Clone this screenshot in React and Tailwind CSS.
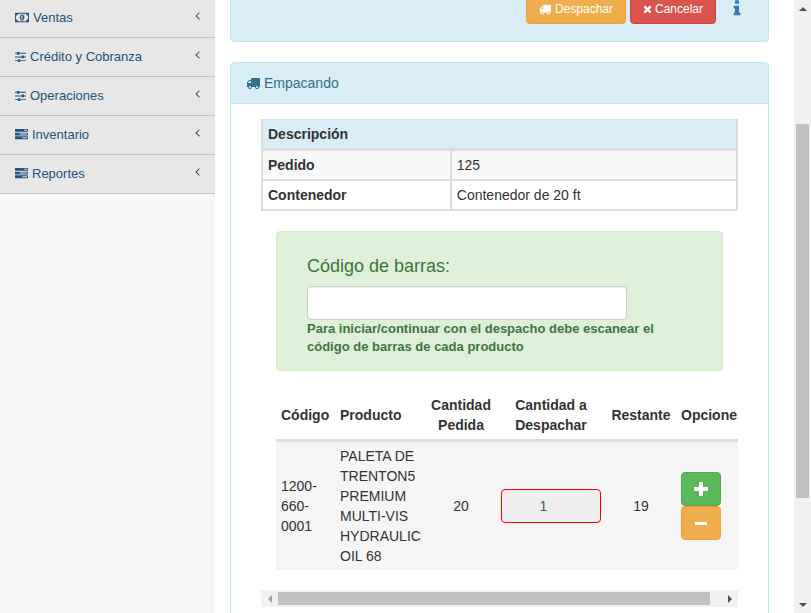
import React from "react";
import clsx from "clsx";

const ICONS = {
  truck: {
    box: "0 0 1792 1792",
    d: "M640 1408q0-52-38-90t-90-38-90 38-38 90 38 90 90 38 90-38 38-90zm-384-512h384v-256h-158q-13 0-22 9l-195 195q-9 9-9 22v30zm1280 512q0-52-38-90t-90-38-90 38-38 90 38 90 90 38 90-38 38-90zm256-1088v1024q0 15-4 26.5t-13.5 18.5-16.5 11.5-23.5 6-22.5 2-25.5 0-22.5-.5q0 106-75 181t-181 75-181-75-75-181h-384q0 106-75 181t-181 75-181-75-75-181h-64q-3 0-22.5.5t-25.5 0-22.5-2-23.5-6-16.5-11.5-13.5-18.5-4-26.5q0-26 19-45t45-19v-320q0-8-.5-35t0-38 2.5-34.5 6.5-37 14-30.5 22.5-30l198-198q19-19 50.5-32t58.5-13h160v-192q0-26 19-45t45-19h1024q26 0 45 19t19 45z",
  },
  sliders: {
    box: "128 0 1536 1792",
    d: "M480 1408v128h-352v-128h352zm352-128q26 0 45 19t19 45v256q0 26-19 45t-45 19h-256q-26 0-45-19t-19-45v-256q0-26 19-45t45-19h256zm160-384v128h-864v-128h864zm-640-512v128h-224v-128h224zm1312 1024v128h-736v-128h736zm-960-1152q26 0 45 19t19 45v256q0 26-19 45t-45 19h-256q-26 0-45-19t-19-45v-256q0-26 19-45t45-19h256zm640 512q26 0 45 19t19 45v256q0 26-19 45t-45 19h-256q-26 0-45-19t-19-45v-256q0-26 19-45t45-19h256zm320 128v128h-224v-128h224zm0-512v128h-864v-128h864z",
  },
  tasks: {
    box: "0 0 1792 1792",
    d: "M1024 1408h640v-128h-640v128zm-384-512h1024v-128h-1024v128zm640-512h384v-128h-384v128zm512 832v256q0 26-19 45t-45 19h-1664q-26 0-45-19t-19-45v-256q0-26 19-45t45-19h1664q26 0 45 19t19 45zm0-512v256q0 26-19 45t-45 19h-1664q-26 0-45-19t-19-45v-256q0-26 19-45t45-19h1664q26 0 45 19t19 45zm0-512v256q0 26-19 45t-45 19h-1664q-26 0-45-19t-19-45v-256q0-26 19-45t45-19h1664q26 0 45 19t19 45z",
  },
  money: {
    box: "0 0 1920 1792",
    d: "M768 1152h384v-96h-128v-448h-114l-148 137 77 80q42-37 55-57h2v288h-128v96zm512-256q0 70-21 142t-59.5 134-101.5 101-138 39-138-39-101.5-101-59.5-134-21-142 21-142 59.5-134 101.5-101 138-39 138 39 101.5 101 59.5 134 21 142zm512 256v-512q-106 0-181-75t-75-181h-1152q0 106-75 181t-181 75v512q106 0 181 75t75 181h1152q0-106 75-181t181-75zm128-832v1152q0 26-19 45t-45 19h-1792q-26 0-45-19t-19-45v-1152q0-26 19-45t45-19h1792q26 0 45 19t19 45z",
  },
  times: {
    box: "192 0 1408 1792",
    d: "M1490 1322q0 40-28 68l-136 136q-28 28-68 28t-68-28l-294-294-294 294q-28 28-68 28t-68-28l-136-136q-28-28-28-68t28-68l294-294-294-294q-28-28-28-68t28-68l136-136q28-28 68-28t68 28l294 294 294-294q28-28 68-28t68 28l136 136q28 28 28 68t-28 68l-294 294 294 294q28 28 28 68z",
  },
  info: {
    box: "576 0 640 1792",
    d: "M1216 1344v128q0 26-19 45t-45 19h-512q-26 0-45-19t-19-45v-128q0-26 19-45t45-19h64v-384h-64q-26 0-45-19t-19-45v-128q0-26 19-45t45-19h384q26 0 45 19t19 45v576h64q26 0 45 19t19 45zm-128-1152v192q0 26-19 45t-45 19h-256q-26 0-45-19t-19-45v-192q0-26 19-45t45-19h256q26 0 45 19t19 45z",
  },
  angleLeft: {
    box: "576 0 640 1792",
    d: "M1203 544q0 13-10 23l-393 393 393 393q10 10 10 23t-10 23l-50 50q-10 10-23 10t-23-10l-466-466q-10-10-10-23t10-23l466-466q10-10 23-10t23 10l50 50q10 10 10 23z",
  },
  plus: { box: "0 0 14 14", d: "M5 0h4v5h5v4h-5v5h-4v-5h-5v-4h5z" },
  minus: { box: "0 0 12 14", d: "M0 6h12v3h-12z" },
};

function Icon({ name, className }) {
  return (
    <svg viewBox={ICONS[name].box} fill="currentColor" aria-hidden="true" className={clsx("shrink-0", className)}>
      <path d={ICONS[name].d} />
    </svg>
  );
}

const MENU = [
  { label: "Ventas", icon: "money", size: "h-[13px] w-[14px]" },
  { label: "Crédito y Cobranza", icon: "sliders", size: "h-[13px] w-[11px]" },
  { label: "Operaciones", icon: "sliders", size: "h-[13px] w-[11px]" },
  { label: "Inventario", icon: "tasks", size: "h-[13px] w-[13px]" },
  { label: "Reportes", icon: "tasks", size: "h-[13px] w-[13px]" },
];

function Sidebar() {
  return (
    <nav className="w-[215px] shrink-0 bg-[#f8f8f8]">
      <ul className="-mt-px">
        {MENU.map((item) => (
          <li key={item.label} className="border-b border-[#c4c4c4] bg-[#e7e7e7]">
            <a href="#" className="flex h-[38px] items-center gap-1 px-[15px] text-[13px] text-[#23527c]">
              <Icon name={item.icon} className={clsx("mb-[2px]", item.size)} />
              <span className="grow">{item.label}</span>
              <Icon name="angleLeft" className="mb-[6px] h-[13px] w-[5px]" />
            </a>
          </li>
        ))}
      </ul>
    </nav>
  );
}

function OrderSummary() {
  const edge = "border-[#ddd] px-[5px] py-1 text-left";
  return (
    <table className="w-full table-fixed border-separate border-spacing-0">
      <colgroup>
        <col className="w-2/5" />
        <col />
      </colgroup>
      <thead>
        <tr className="bg-[#d9edf7]">
          <th colSpan={2} className={clsx(edge, "border-x-2 border-t border-b-[3px]")}>Descripción</th>
        </tr>
      </thead>
      <tbody>
        <tr className="bg-[#f9f9f9]">
          <th scope="row" className={clsx(edge, "border-x-2 border-b-2")}>Pedido</th>
          <td className={clsx(edge, "border-r-2 border-b-2")}>125</td>
        </tr>
        <tr>
          <th scope="row" className={clsx(edge, "border-x-2 border-b-2")}>Contenedor</th>
          <td className={clsx(edge, "border-r-2 border-b-2")}>Contenedor de 20 ft</td>
        </tr>
      </tbody>
    </table>
  );
}

function BarcodeBox() {
  return (
    <section className="mx-[15px] mt-5 rounded-[4px] border border-[#d6e9c6] bg-[#dff0d8] px-[30px] pt-6 pb-[14px] text-[#3c763d]">
      <label htmlFor="barcode" className="mb-[10px] block text-[18px]/[20px]">Código de barras:</label>
      <input
        id="barcode"
        type="text"
        className="block h-[34px] w-full max-w-[320px] rounded-[4px] border border-[#ccc] bg-white px-3 text-[#555] shadow-[inset_0_1px_1px_rgba(0,0,0,0.075)]"
      />
      <p className="text-[13px]/[18px] font-bold">
        Para iniciar/continuar con el despacho debe escanear el código de barras de cada producto
      </p>
    </section>
  );
}

function ProductTable() {
  const head = "border-b-[3px] border-[#ddd] px-[5px] py-1";
  const cell = "px-[5px] py-1";
  return (
    <div className="mt-5 ml-[15px] overflow-hidden">
      <table className="w-[475px] table-fixed border-separate border-spacing-0">
        <colgroup>
          <col className="w-[59px]" />
          <col className="w-[91px]" />
          <col className="w-[70px]" />
          <col className="w-[110px]" />
          <col className="w-[70px]" />
          <col />
        </colgroup>
        <thead>
          <tr>
            <th className={clsx(head, "text-left")}>Código</th>
            <th className={clsx(head, "text-left")}>Producto</th>
            <th className={head}>Cantidad Pedida</th>
            <th className={head}>Cantidad a Despachar</th>
            <th className={head}>Restante</th>
            <th className={clsx(head, "text-left")}>Opciones</th>
          </tr>
        </thead>
        <tbody>
          <tr className="bg-[#f5f5f5]">
            <td className={cell}>1200-660-0001</td>
            <td className={cell}>PALETA DE TRENTON5 PREMIUM MULTI-VIS HYDRAULIC OIL 68</td>
            <td className={clsx(cell, "text-center")}>20</td>
            <td className={cell}>
              <input
                type="text"
                inputMode="numeric"
                readOnly
                value="1"
                aria-label="Cantidad a despachar"
                className="block h-[34px] w-full rounded-[4px] border border-[#f00] bg-[#eee] pr-[27px] pl-3 text-center text-[#555]"
              />
            </td>
            <td className={clsx(cell, "text-center")}>19</td>
            <td className={cell}>
              <button type="button" aria-label="Agregar" className="flex h-[34px] w-10 items-center justify-center rounded-[4px] border border-[#4cae4c] bg-[#5cb85c] text-white">
                <Icon name="plus" className="h-[14px] w-[14px]" />
              </button>
              <button type="button" aria-label="Quitar" className="flex h-[34px] w-10 items-center justify-center rounded-[4px] border border-[#eea236] bg-[#f0ad4e] text-white">
                <Icon name="minus" className="h-[14px] w-[12px]" />
              </button>
            </td>
          </tr>
        </tbody>
      </table>
    </div>
  );
}

function HorizontalScrollbar() {
  return (
    <div className="mt-5 flex h-[17px] items-center bg-[#f1f1f1]" aria-hidden="true">
      <span className="flex w-[17px] justify-center">
        <span className="border-y-4 border-r-4 border-y-transparent border-r-[#a3a3a3]" />
      </span>
      <span className="mr-[11px] h-[13px] grow bg-[#c1c1c1]" />
      <span className="flex w-[17px] justify-center">
        <span className="border-y-4 border-l-4 border-y-transparent border-l-[#505050]" />
      </span>
    </div>
  );
}

function PageScrollbar() {
  return (
    <div className="flex w-[17px] shrink-0 flex-col items-center bg-[#f1f1f1]" aria-hidden="true">
      <span className="flex h-[17px] items-center">
        <span className="border-x-4 border-b-4 border-x-transparent border-b-[#505050]" />
      </span>
      <span className="grow-[107]" />
      <span className="w-[13px] grow-[374] bg-[#c1c1c1]" />
      <span className="grow-[98]" />
      <span className="flex h-[17px] items-center">
        <span className="border-x-4 border-t-4 border-x-transparent border-t-[#505050]" />
      </span>
    </div>
  );
}

export default function App() {
  return (
    <div className="flex h-screen overflow-hidden bg-white font-['Liberation_Sans',Arial,sans-serif] text-[14px]/[20px] text-[#333]">
      <Sidebar />
      <main className="min-w-0 grow pr-[25px] pl-[15px]">
        <section className="-mt-[25px] flex items-center justify-end gap-1 rounded-[4px] border border-[#bce8f1] bg-[#d9edf7] py-[17px] pr-[27px]">
          <button type="button" className="flex h-[31px] items-center gap-1 rounded-[4px] border border-[#eea236] bg-[#f0ad4e] px-3 text-[12px] text-white">
            <Icon name="truck" className="h-3 w-3" />
            Despachar
          </button>
          <button type="button" className="flex h-[31px] items-center gap-[3px] rounded-[4px] border border-[#d43f3a] bg-[#d9534f] px-3 text-[12px] text-white">
            <Icon name="times" className="h-3 w-[9px]" />
            Cancelar
          </button>
          <a href="#" aria-label="Información" className="ml-[13px] text-[#337ab7]">
            <Icon name="info" className="h-[19px] w-2" />
          </a>
        </section>
        <section className="mt-5 rounded-[4px] border border-[#bce8f1]">
          <h2 className="flex items-center gap-1 rounded-t-[3px] border-b border-[#bce8f1] bg-[#d9edf7] px-[15px] py-[10px] text-[#31708f]">
            <Icon name="truck" className="h-[14px] w-[14px]" />
            Empacando
          </h2>
          <div className="px-[30px] py-[15px]">
            <OrderSummary />
            <BarcodeBox />
            <ProductTable />
            <HorizontalScrollbar />
          </div>
        </section>
      </main>
      <PageScrollbar />
    </div>
  );
}
